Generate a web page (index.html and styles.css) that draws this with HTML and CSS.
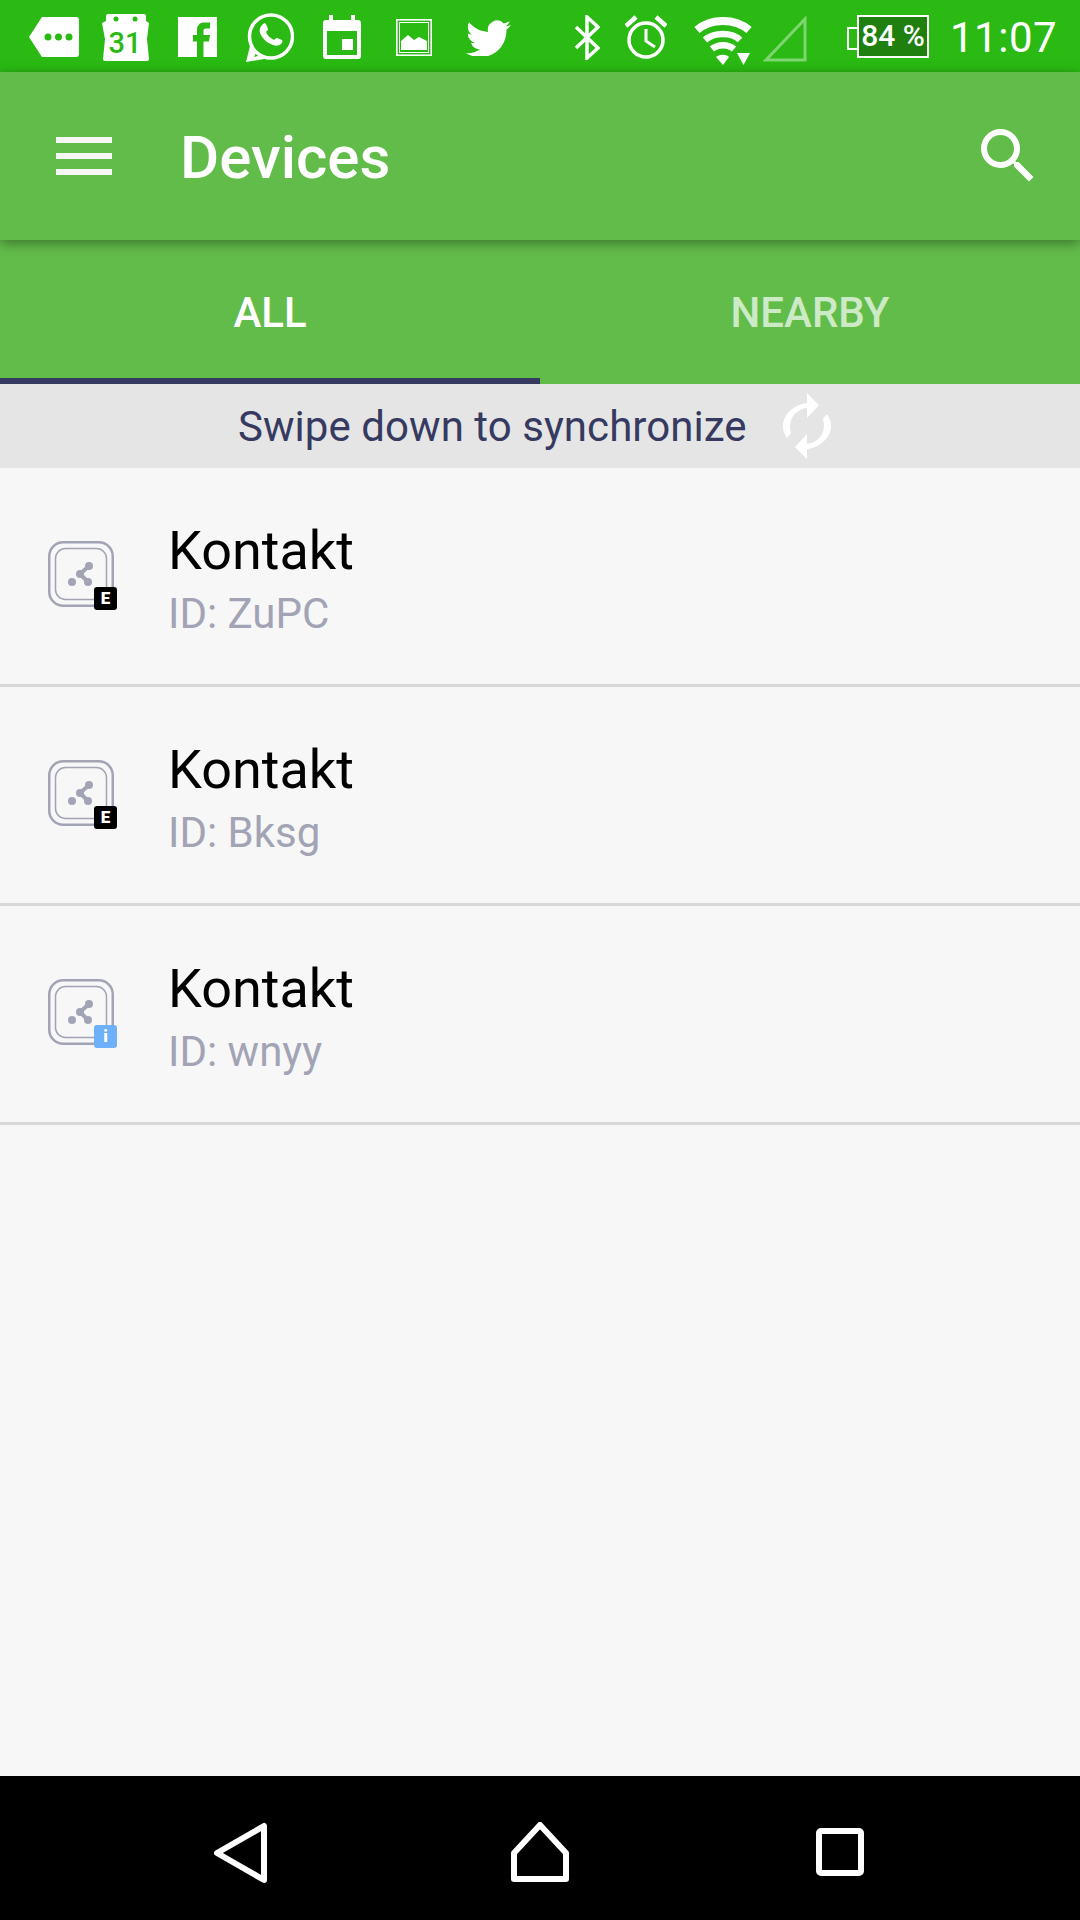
FILE: index.html
```html
<!DOCTYPE html>
<html lang="en">
<head>
	<meta charset="UTF-8">
	<title>Devices</title>
	<link rel="stylesheet" href="styles.css">
</head>
<body>
	<div id="phone">
		<div class="status">
			<svg class="ic-msg" width="50" height="40" viewBox="0 0 50 40"><path d="M13 0H47a3 3 0 0 1 3 3V37a3 3 0 0 1-3 3H13L0 20Z" fill="#fff"/><g fill="#2aba13"><circle cx="19" cy="20" r="3.5"/><circle cx="29.500" cy="20" r="3.500"/><circle cx="40" cy="20" r="3.500"/></g></svg>
			<svg class="ic-cal" width="48" height="48" viewBox="0 0 48 48"><path d="M4 3a2 2 0 0 1 2-2H42a2 2 0 0 1 2 2V8L47 10L45 26L47 46a2 2 0 0 1-2 2H3a2 2 0 0 1-2-2L3 26L0 10L4 8Z" fill="#fff"/><circle cx="14" cy="6" r="2.500" fill="#2aba13"/><circle cx="33" cy="6" r="2.500" fill="#2aba13"/><text x="23" y="40" class="cal-num">31</text></svg>
			<svg class="ic-fb" width="39" height="40" viewBox="0 0 39 40"><rect width="39" height="40" fill="#fff"/><path d="M19 40V24.500H15V18H19V13C19 8 22 5.500 26 5.500H32V11.500H28C26 11.500 25.500 12.500 25.500 14V18H32L31 24.500H25.500V40Z" fill="#2aba13"/></svg>
			<svg class="ic-wa" width="48" height="49" viewBox="0 0 48 49"><circle cx="25" cy="23.500" r="21.500" fill="none" stroke="#fff" stroke-width="3.500"/><path d="M0 49L4 33L11 38L8 44L16 42L18 46Z" fill="#fff"/><path d="M16 12c2-2 3-2 4-1l2 5c0 1-1 2-2 3 1 3 4 6 8 8 1-1 2-2 3-2l5 2c1 1 0 3-1 4-2 2-5 2-8 1-6-2-11-7-13-12-1-3 0-6 2-8Z" fill="#fff"/></svg>
			<svg class="ic-date" width="38" height="44" viewBox="0 0 38 44"><path d="M6 0H10V5H28V0H32V5H35a3 3 0 0 1 3 3V41a3 3 0 0 1-3 3H3a3 3 0 0 1-3-3V8a3 3 0 0 1 3-3H6Z" fill="#fff"/><rect x="4" y="16" width="30" height="24" fill="#2aba13"/><rect x="19" y="24" width="11" height="11" fill="#fff"/></svg>
			<svg class="ic-img" width="36" height="37" viewBox="0 0 36 37"><rect x=".8" y=".8" width="34.400" height="35.400" fill="none" stroke="#fff" stroke-width="1.600"/><rect x="3.500" y="3.500" width="29" height="30" fill="none" stroke="#fff" stroke-width="1"/><path d="M5 22L12 16L18 21L23 18L31 22V31H5Z" fill="#fff"/></svg>
			<svg class="ic-tw" width="45" height="38" viewBox="0 1 24 20"><path d="M23.953 4.570a10 10 0 0 1-2.825.775 4.958 4.958 0 0 0 2.163-2.723c-.951.555-2.005.959-3.127 1.184a4.920 4.920 0 0 0-8.384 4.482C7.690 8.095 4.067 6.130 1.640 3.162a4.822 4.822 0 0 0-.666 2.475c0 1.710.870 3.213 2.188 4.096a4.904 4.904 0 0 1-2.228-.616v.060a4.923 4.923 0 0 0 3.946 4.827 4.996 4.996 0 0 1-2.212.085 4.936 4.936 0 0 0 4.604 3.417 9.867 9.867 0 0 1-6.102 2.105c-.390 0-.779-.023-1.170-.067a13.995 13.995 0 0 0 7.557 2.209c9.053 0 13.998-7.496 13.998-13.985 0-.210 0-.420-.015-.630A9.935 9.935 0 0 0 24 4.590z" fill="#fff"/></svg>

			<svg class="ic-bt" width="26" height="45" viewBox="0 0 26 45"><path d="M2 12L24 33L13 43V2L24 12L2 33" fill="none" stroke="#fff" stroke-width="3.500"/></svg>
			<svg class="ic-alarm" width="42" height="44" viewBox="0 0 42 44"><circle cx="21" cy="25" r="17" fill="none" stroke="#fff" stroke-width="3.500"/><path d="M21 14V26L30 32" fill="none" stroke="#fff" stroke-width="3"/><path d="M1 11L11 2M41 11L31 2" fill="none" stroke="#fff" stroke-width="4.500"/></svg>
			<svg class="ic-wifi" width="58" height="50" viewBox="0 0 58 50"><g fill="none" stroke="#fff"><path d="M3 15C17 3 41 3 55 15" stroke-width="8"/><path d="M11 25C20 17 38 17 46 25" stroke-width="6.500"/><path d="M18 34C24 29 34 29 40 34" stroke-width="6.500"/></g><path d="M22 42C26 39 32 39 35 42L29 50Z" fill="#fff"/><path d="M43 38H56L49.500 50Z" fill="#fff"/></svg>
			<svg class="ic-sig" width="44" height="46" viewBox="0 0 44 46"><path d="M42 3V44H3Z" fill="none" stroke="#fff" stroke-opacity=".4" stroke-width="3"/></svg>
			<div class="battery"><span class="batt-text">84 %</span></div>
			<span class="clock">11:07</span>
		</div>

		<div class="toolbar">
			<div class="menu"><i></i><i></i><i></i></div>
			<div class="title">Devices</div>
			<svg class="search" width="72" height="72" viewBox="0 0 24 24"><path d="M15.500 14h-.79l-.28-.27A6.471 6.471 0 0 0 16 9.500 6.500 6.500 0 1 0 9.500 16c1.610 0 3.090-.59 4.230-1.570l.27.28v.79l5 4.990L20.490 19l-4.990-5zm-6 0C7.010 14 5 11.990 5 9.500S7.010 5 9.500 5 14 7.010 14 9.500 11.990 14 9.500 14z" fill="#fff"/></svg>
		</div>

		<div class="tabs">
			<div class="tab active">ALL</div>
			<div class="tab">NEARBY</div>
		</div>

		<div class="sync">
			<span class="sync-text">Swipe down to synchronize</span>
			<svg class="sync-icon" width="50" height="66" viewBox="0 0 50 66"><g fill="#fff"><path d="M25 0L37 12L25 25V15C14 16 5 26 9 40L5 45C-6 30 7 12 25 10Z"/><path d="M25 66L13 54L25 41V51C36 50 45 40 41 26L45 21C56 36 43 54 25 56Z"/></g></svg>
		</div>

		<ul class="list">
			<li class="row">
				<div class="device">
					<svg width="66" height="66" viewBox="0 0 66 66"><use href="#beacon"/></svg>
					<span class="badge">E</span>
				</div>
				<div class="info">
					<div class="name">Kontakt</div>
					<div class="uid">ID: ZuPC</div>
				</div>
			</li>
			<li class="row">
				<div class="device">
					<svg width="66" height="66" viewBox="0 0 66 66"><use href="#beacon"/></svg>
					<span class="badge">E</span>
				</div>
				<div class="info">
					<div class="name">Kontakt</div>
					<div class="uid">ID: Bksg</div>
				</div>
			</li>
			<li class="row">
				<div class="device">
					<svg width="66" height="66" viewBox="0 0 66 66"><use href="#beacon"/></svg>
					<span class="badge blue">i</span>
				</div>
				<div class="info">
					<div class="name">Kontakt</div>
					<div class="uid">ID: wnyy</div>
				</div>
			</li>
		</ul>

		<div class="nav">
			<svg width="58" height="64" viewBox="0 0 58 64"><path d="M53 6V60L6 33Z" fill="none" stroke="#fff" stroke-width="6" stroke-linejoin="round"/></svg>
			<svg width="58" height="60" viewBox="0 0 58 60"><path d="M29 3L55 31V57H3V31Z" fill="none" stroke="#fff" stroke-width="6" stroke-linejoin="round"/></svg>
			<svg width="48" height="48" viewBox="0 0 48 48"><rect x="3" y="3" width="42" height="42" rx="2" fill="none" stroke="#fff" stroke-width="6"/></svg>
		</div>
	</div>

	<svg class="defs" width="0" height="0">
		<g id="beacon">
			<rect x="1.250" y="1.250" width="63.500" height="63.500" rx="14" fill="none" stroke="#a2a3b5" stroke-width="2.500"/>
			<rect x="7.500" y="7.500" width="51" height="51" rx="10" fill="none" stroke="#a2a3b5" stroke-width="1.500"/>
			<path d="M41 25L32 33L40 41" fill="none" stroke="#a2a3b5" stroke-width="4"/>
			<g fill="#a2a3b5">
				<circle cx="41" cy="25" r="4"/>
				<circle cx="32" cy="33" r="4"/>
				<circle cx="40" cy="41" r="4"/>
				<circle cx="24" cy="41" r="4"/>
			</g>
		</g>
	</svg>
</body>
</html>
```

FILE: styles.css
```css
*{
	box-sizing:border-box;
}
html,body{
	margin:0;
	padding:0;
}
body{
	font-family:Roboto,"Liberation Sans",sans-serif;
}
.defs{
	position:absolute;
}
#phone{
	width:1080px;
	height:1920px;
	display:flex;
	flex-direction:column;
	background:#f7f7f7;
	overflow:hidden;
}

/* status bar */
.status{
	height:72px;
	flex:none;
	display:flex;
	align-items:flex-start;
	background:#2aba13;
	color:#fff;
}
.status svg{
	display:block;
	flex:none;
}
.ic-msg{margin:17px 0 0 29px;}
.ic-cal{margin:13px 0 0 23px;}
.ic-fb{margin:17px 0 0 28px;}
.ic-wa{margin:13px 0 0 29px;}
.ic-date{margin:15px 0 0 29px;}
.ic-img{margin:19px 0 0 35px;}
.ic-tw{margin:18px 0 0 34px;}
.ic-bt{margin:15px 0 0 63px;}
.ic-alarm{margin:15px 0 0 25px;}
.ic-wifi{margin:15px 0 0 27px;}
.ic-sig{margin:16px 0 0 11px;}
.cal-num{
	font-family:Roboto,sans-serif;
	font-size:29px;
	font-weight:500;
	fill:#2aba13;
	text-anchor:middle;
}
.battery{
	position:relative;
	width:72px;
	height:43px;
	margin:15px 0 0 50px;
	border:2px solid #fff;
	background:#1f8010;
	text-align:center;
}
.battery:before{
	content:"";
	position:absolute;
	left:-12px;
	top:10px;
	width:10px;
	height:19px;
	border:2px solid #fff;
	border-right:0;
}
.batt-text{
	font-size:30px;
	font-weight:500;
	line-height:38px;
	white-space:nowrap;
}
.clock{
	margin:14px 0 0 21px;
	font-size:42px;
	line-height:48px;
	letter-spacing:.5px;
}

/* toolbar */
.toolbar{
	position:relative;
	z-index:2;
	height:168px;
	flex:none;
	display:flex;
	align-items:center;
	padding:0 36px 0 56px;
	background:#62bc4a;
	box-shadow:0 3px 12px rgba(0,0,0,.4);
}
.menu{
	width:56px;
	display:flex;
	flex-direction:column;
	gap:10px;
}
.menu i{
	display:block;
	height:6px;
	background:#f7f7f7;
}
.title{
	flex:1;
	margin:3px 0 0 68px;
	font-size:60px;
	font-weight:500;
	color:#fff;
}

/* tabs */
.tabs{
	height:144px;
	flex:none;
	display:flex;
	background:#62bc4a;
}
.tab{
	width:540px;
	padding-top:6px;
	display:flex;
	align-items:center;
	justify-content:center;
	font-size:42px;
	font-weight:500;
	color:rgba(255,255,255,.7);
	border-bottom:6px solid transparent;
}
.tab.active{
	color:#fff;
	border-bottom-color:#363a61;
}

/* sync hint */
.sync{
	height:84px;
	flex:none;
	display:flex;
	align-items:center;
	padding-left:238px;
	background:#e5e5e5;
}
.sync-text{
	font-size:42px;
	letter-spacing:.05px;
	color:#363a61;
	margin-top:1px;
}
.sync-icon{
	margin-left:35px;
}

/* device list */
.list{
	flex:1;
	list-style-type:none;
	margin:0;
	padding:0;
}
.row{
	height:219px;
	display:flex;
	align-items:center;
	padding-left:48px;
	border-bottom:3px solid #d8d8d8;
}
.device{
	position:relative;
	width:66px;
	height:66px;
	margin-top:-4px;
}
.device svg{
	display:block;
}
.badge{
	position:absolute;
	left:46px;
	top:46px;
	width:23px;
	height:23px;
	border-radius:3px;
	background:#000;
	color:#fff;
	font-size:17px;
	font-weight:900;
	line-height:23px;
	text-align:center;
}
.badge.blue{
	background:#6eb0fa;
}
.info{
	margin:6px 0 0 54px;
}
.name{
	font-size:54px;
	line-height:64px;
	color:#000;
}
.uid{
	font-size:42px;
	line-height:50px;
	margin-top:6px;
	color:#a2a3b5;
}

/* nav bar */
.nav{
	height:144px;
	flex:none;
	display:grid;
	grid-template-columns:repeat(3,300px);
	align-items:center;
	justify-items:center;
	padding:8px 90px 0;
	background:#000;
}
```
